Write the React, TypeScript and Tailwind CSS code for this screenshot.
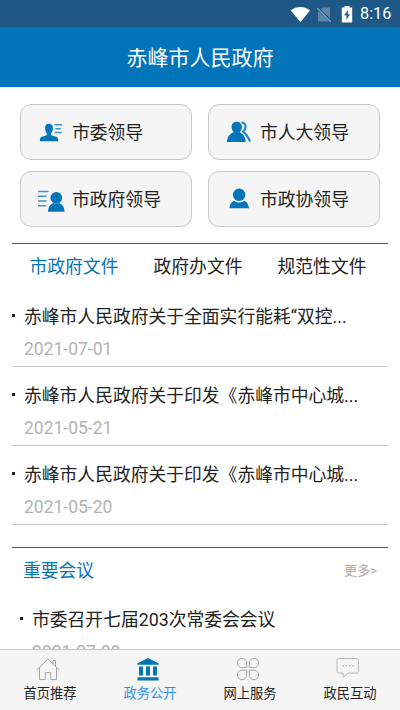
import type { ReactNode } from 'react';

const leaders: { label: string; icon: ReactNode }[] = [
  {
    label: '市委领导',
    icon: (
      <svg className="h-[26px] w-[32px]" viewBox="0 0 32 26" fill="#0275ba">
        <path d="M13 4.700c2.700 0 4 1.700 3.900 4.300-.1 2.600-.7 4.200-1.700 5.300v2l4.800 1.500c1.600.6 2.200 1.500 2.200 4.400H3.900c0-2.900.5-3.800 2.100-4.400l4.800-1.500v-2c-1-1.100-1.600-2.700-1.700-5.300-.1-2.600 1.200-4.300 3.900-4.300z" />
        <path d="M18.500 5.700h7.500M19.300 9.700h5.500M18.500 13.500h7.200" stroke="#3d96ca" strokeWidth="1.500" />
      </svg>
    ),
  },
  {
    label: '市人大领导',
    icon: (
      <svg className="h-[26px] w-[32px]" viewBox="0 0 32 26" fill="#0275ba">
        <path d="M12.700 2.800c3.200 0 5.100 2.100 5.100 5.100 0 2.400-.9 4.100-2.300 5.300 3.600 1.300 6 4.800 6.200 9.800H2.900c.4-4.900 2.700-8.400 7-9.800-1.400-1.200-2.300-2.900-2.300-5.300 0-3 2-5.100 5.100-5.100z" />
        <path d="M17.500 3.300c2.800.7 4.100 2.300 4.100 4.700 0 2-1.200 3.600-2.500 4.700 3.600 2.800 5.200 5.600 6.900 9.800" fill="none" stroke="#2489c4" strokeWidth="2.200" />
      </svg>
    ),
  },
  {
    label: '市政府领导',
    icon: (
      <svg className="h-[26px] w-[32px]" viewBox="0 0 32 26" fill="#0275ba">
        <circle cx="20.300" cy="11.800" r="5.900" />
        <path d="M12 25.800c.2-4.300 1.700-7.100 5.200-8.700 1.900.9 4.300.9 6.200 0 3.500 1.600 5 4.400 5.200 8.700z" />
        <path d="M2 5.400h10.500M2 10.200h8.500M2 15h8.500M2 19.700h8.200" stroke="#3d96ca" strokeWidth="1.500" />
      </svg>
    ),
  },
  {
    label: '市政协领导',
    icon: (
      <svg className="h-[26px] w-[32px]" viewBox="0 0 32 26" fill="#0275ba">
        <circle cx="15.100" cy="8.800" r="6.200" />
        <path d="M9.900 14.800c3 2.400 7.400 2.400 10.400 0 2.800 1.100 4.100 3.600 4.700 7.500H5.400c.6-3.900 1.800-6.400 4.500-7.500z" />
      </svg>
    ),
  },
];

const tabs = ['市政府文件', '政府办文件', '规范性文件'];

const documents = [
  { title: '赤峰市人民政府关于全面实行能耗“双控...', date: '2021-07-01' },
  { title: '赤峰市人民政府关于印发《赤峰市中心城...', date: '2021-05-21' },
  { title: '赤峰市人民政府关于印发《赤峰市中心城...', date: '2021-05-20' },
];

const navItems: { label: string; icon: ReactNode }[] = [
  {
    label: '首页推荐',
    icon: (
      <svg className="h-6 w-6" viewBox="0 0 24 24" fill="none" stroke="#a5a5a5">
        <path d="M1.300 12.600 12 1.800l10.700 10.800M17 6.800V3.500h2.500v5.800M3.500 10.500v12.100h5.800v-7h5.400v7h5.800V10.500" />
      </svg>
    ),
  },
  {
    label: '政务公开',
    icon: (
      <svg className="h-6 w-6" viewBox="0 0 24 24" fill="#0275ba">
        <path d="M12 1 1.200 6.500v1.300h21.600V6.500zM3 9.500h4v9H3zM10 9.500h4v9h-4zM17 9.500h4v9h-4zM1.500 20.300h21v3.300h-21z" />
      </svg>
    ),
  },
  {
    label: '网上服务',
    icon: (
      <svg className="h-6 w-6" viewBox="0 0 24 24" fill="none" stroke="#a5a5a5">
        <path d="M10.700 10.700H6A4.700 4.700 0 1 1 10.700 6zM13.300 10.700H18A4.700 4.700 0 1 0 13.300 6zM10.700 13.300H6A4.700 4.700 0 1 0 10.700 18zM13.300 13.300H18A4.700 4.700 0 1 1 13.300 18z" />
      </svg>
    ),
  },
  {
    label: '政民互动',
    icon: (
      <svg className="h-6 w-6" viewBox="0 0 24 24" fill="none" stroke="#b9b9b9">
        <path d="M3 1.500h17.500c1.300 0 2 .7 2 2V14c0 1.300-.7 2-2 2h-8L7 20.500V16H3c-1.300 0-2-.7-2-2V3.500c0-1.300.7-2 2-2z" />
        <path d="M6.500 8.700H18" strokeWidth="1.500" strokeDasharray="1.500 1.800" />
      </svg>
    ),
  },
];

function StatusBar() {
  return (
    <div className="flex h-[27px] shrink-0 items-center bg-[#1e5985] pl-[290px] text-white">
      <svg className="h-5 w-[22px]" viewBox="0 0 22 20" fill="#fff">
        <path d="M.8 6.500C6 1.900 14.800 1.900 20 6.500L10.400 18.200z" />
      </svg>
      <svg className="ml-[4px] h-5 w-[17px]" viewBox="0 0 17 20">
        <path d="M6.500 3.500H14v14H2V8z" fill="#5d87a8" />
        <path d="M1 3.500 15.500 18" stroke="#1e5985" strokeWidth="3" />
        <path d="M1.200 4.200 14.800 17.800" stroke="#8faac0" strokeWidth="1.200" />
      </svg>
      <svg className="ml-[8px] h-5 w-3" viewBox="0 0 12 20">
        <path d="M3.500 2h5v1.500h2.700v15H.8v-15h2.700z" fill="#fff" />
        <path d="M7.200 6 3 11.300h2.500v4.500L9 10.300H6.600z" fill="#1e5985" />
      </svg>
      <span className="ml-[7px] pt-[2px] text-[16.300px] leading-none">8:16</span>
    </div>
  );
}

function NewsItem({ title, date }: { title: string; date: string }) {
  return (
    <div className="flex">
      <span className="mt-[21px] h-[3px] w-[3px] shrink-0 bg-[#222]" />
      <div className="ml-[9px] whitespace-nowrap">
        <div className="pt-[12px] text-[17.800px] leading-6 text-[#222]">{title}</div>
        <div className="mt-[8px] text-[17.500px] leading-6 text-[#b2b2b2]">{date}</div>
      </div>
    </div>
  );
}

export default function App() {
  return (
    <div className="flex h-[710px] w-[400px] flex-col overflow-hidden bg-white font-['Roboto','Noto_Sans_CJK_SC',sans-serif]">
      <StatusBar />
      <header className="flex h-[60px] shrink-0 items-center justify-center bg-[#0275ba] pt-[4px] text-[21px] text-white">
        赤峰市人民政府
      </header>

      <main className="min-h-0 flex-1 overflow-hidden">
        <div className="grid grid-cols-2 gap-x-4 gap-y-[11px] px-5 pt-[17px]">
          {leaders.map((item) => (
            <div
              key={item.label}
              className="flex h-[56px] items-center rounded-[11px] border border-[#c8c8c8] bg-[#f5f5f5] pl-[15px] text-[17.800px] text-[#222]"
            >
              {item.icon}
              <span className="ml-[4px] pt-[2px]">{item.label}</span>
            </div>
          ))}
        </div>

        <section className="mx-3 mt-4 border-t border-[#0275ba]">
          <div className="flex h-[49px] pt-[11px] text-[17.800px] leading-6">
            {tabs.map((tab, i) => (
              <span key={tab} className={i === 0 ? 'w-[124px] text-center text-[#0275ba]' : 'w-[124px] text-center text-[#222]'}>
                {tab}
              </span>
            ))}
          </div>
          {documents.map((doc) => (
            <div key={doc.date} className="h-[79px] pb-[5px]">
              <div className="h-[74px] border-b border-[#c8c8c8]">
                <NewsItem {...doc} />
              </div>
            </div>
          ))}
        </section>

        <section className="mx-3 mt-[17px] border-t border-[#0275ba]">
          <div className="flex items-center justify-between pt-[11px] pr-[11px] pl-[11px]">
            <h2 className="text-[17.800px] leading-6 text-[#0275ba]">重要会议</h2>
            <span className="text-[13px] text-[#aaa]">更多&gt;</span>
          </div>
          <div className="mt-[13px] pl-2">
            <NewsItem title="市委召开七届203次常委会会议" date="2021-07-08" />
          </div>
        </section>
      </main>

      <nav className="grid h-[61px] shrink-0 grid-cols-4 border-t border-[#c8c8c8] bg-[#f5f5f5]">
        {navItems.map((item, i) => (
          <div key={item.label} className="flex flex-col items-center pt-[7px]">
            <span className="pr-1">{item.icon}</span>
            <span className={i === 1 ? 'mt-[3px] text-[13.300px] leading-5 text-[#2d8fe6]' : 'mt-[3px] text-[13.300px] leading-5 text-[#222]'}>
              {item.label}
            </span>
          </div>
        ))}
      </nav>
    </div>
  );
}
